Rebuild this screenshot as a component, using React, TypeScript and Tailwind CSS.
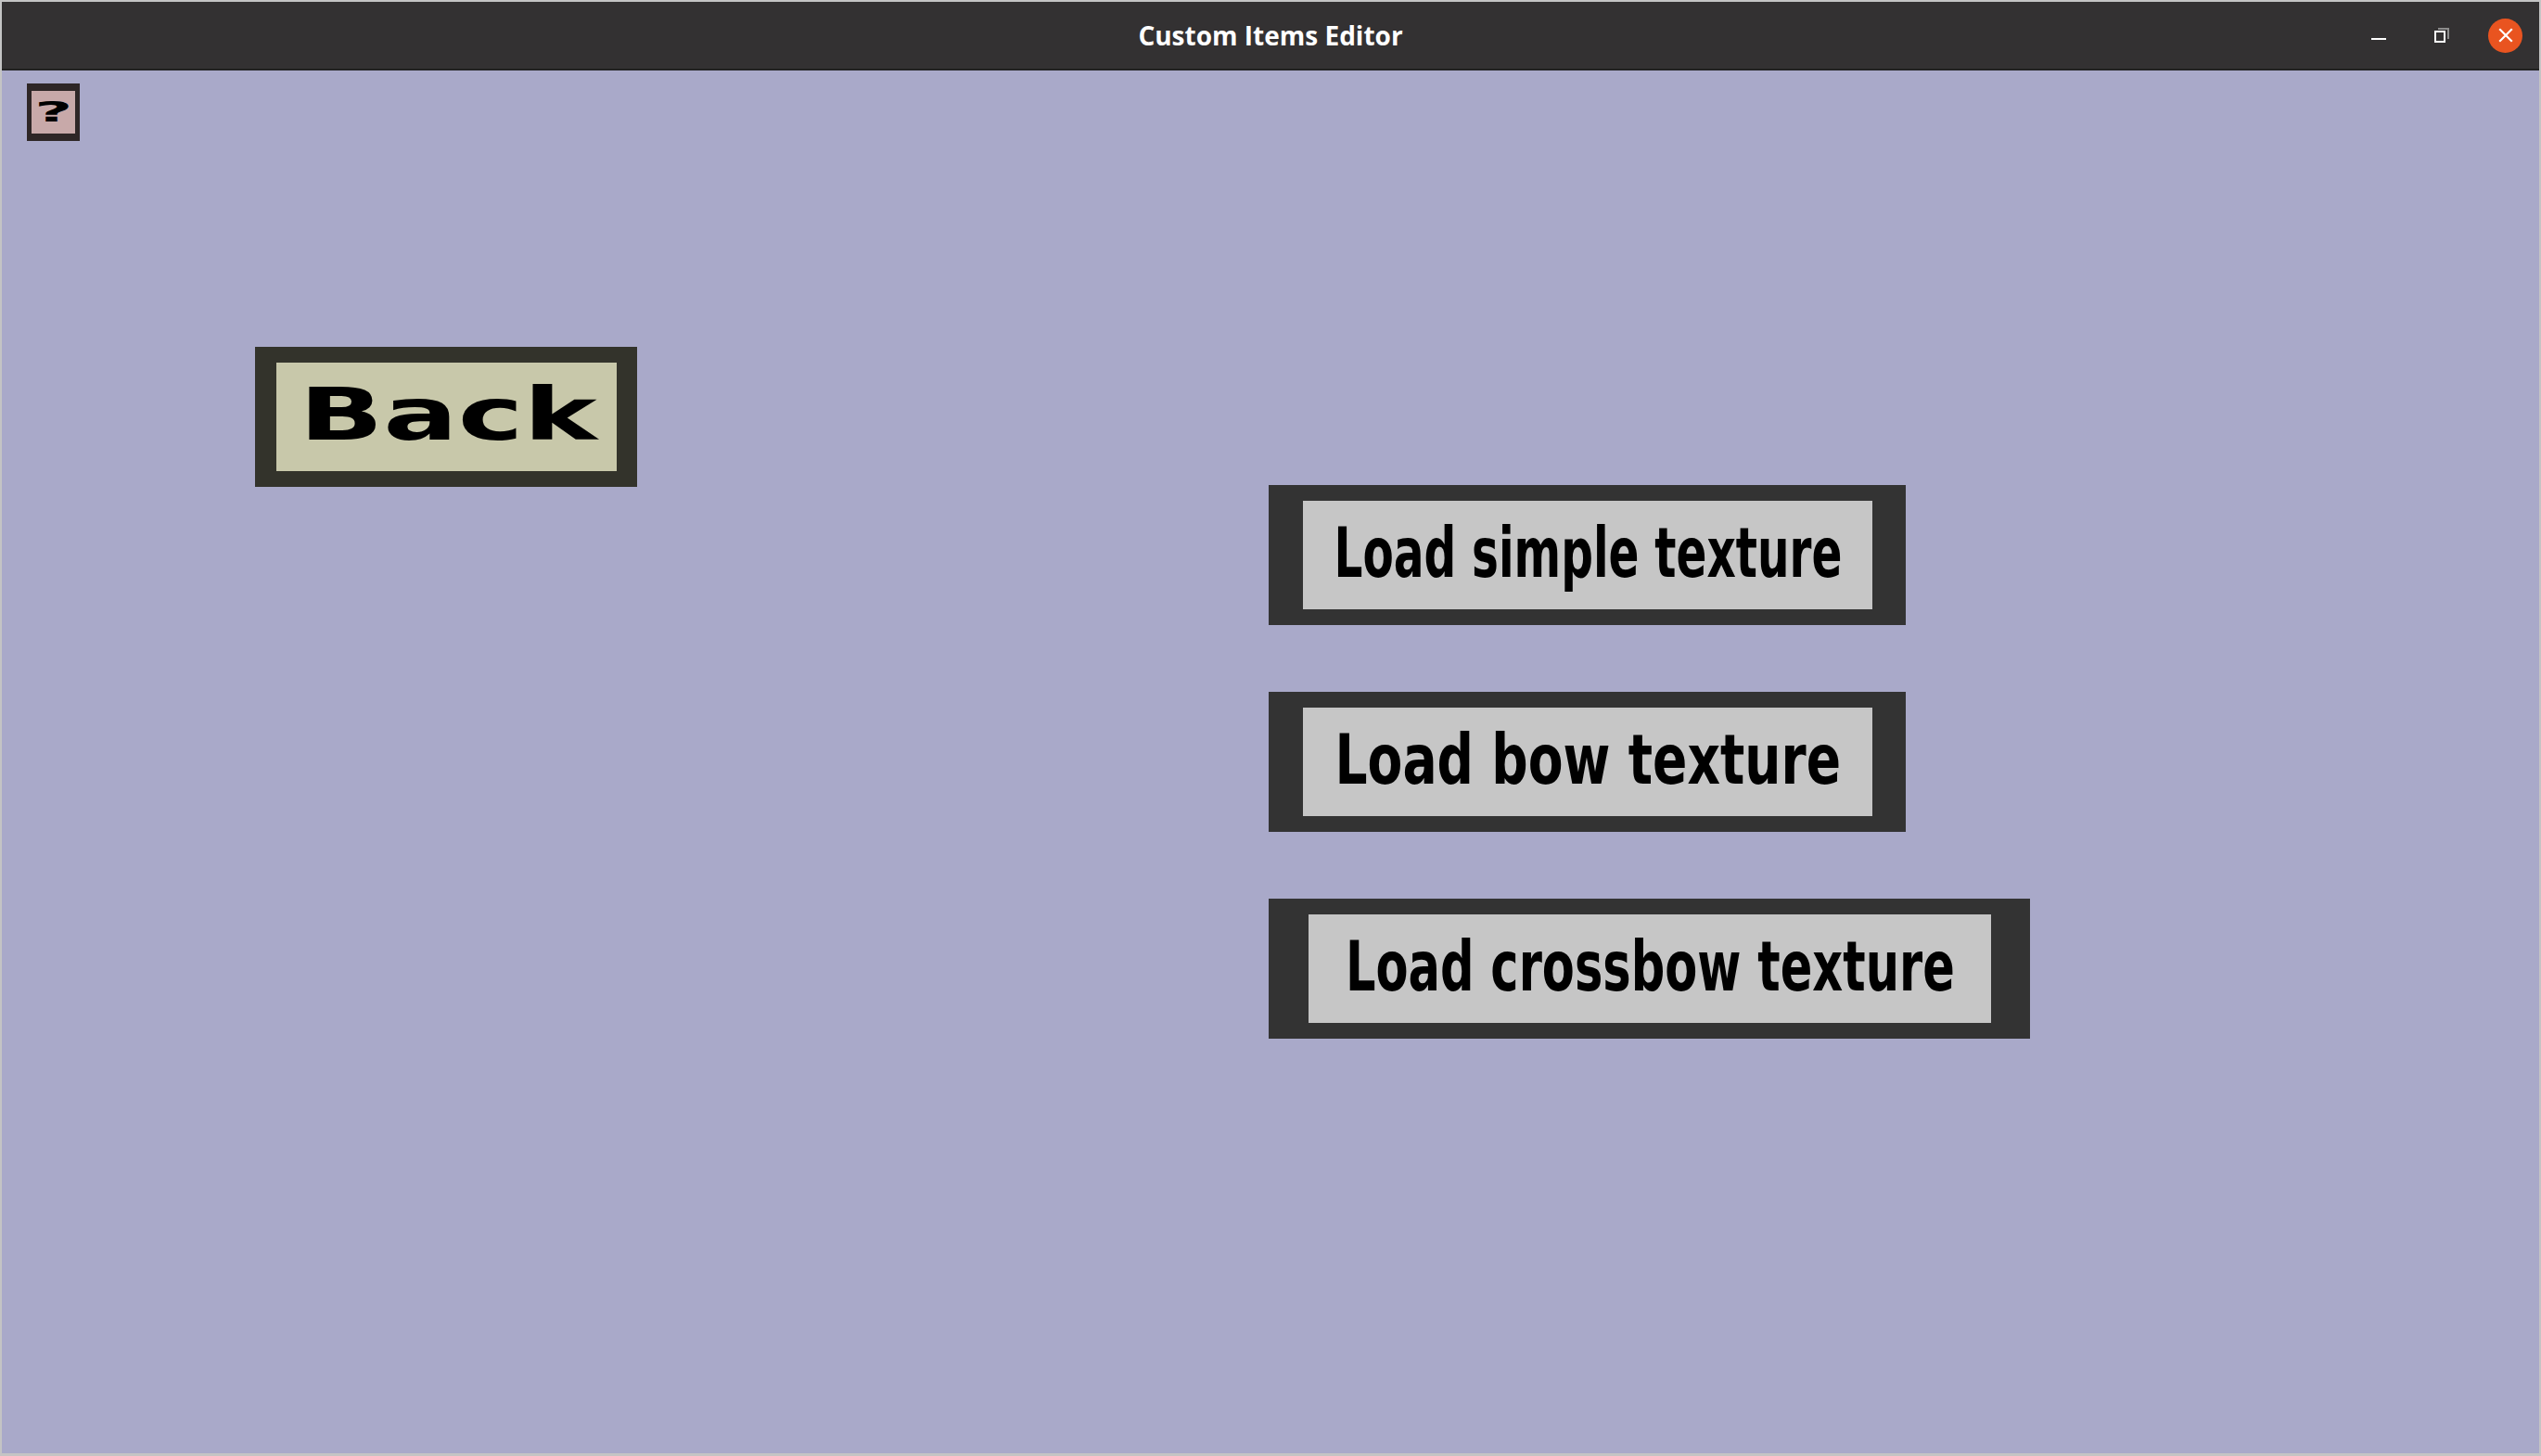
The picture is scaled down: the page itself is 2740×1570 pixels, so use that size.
import { useLayoutEffect, useRef, useState } from 'react'

const pixelFont = { fontFamily: '"DejaVu Sans", "Liberation Sans", sans-serif' }

interface FitTextProps {
  text: string
  fontSize: number
  targetWidth: number
}

function FitText({ text, fontSize, targetWidth }: FitTextProps) {
  const ref = useRef<HTMLSpanElement>(null)
  const [scale, setScale] = useState(1)

  useLayoutEffect(() => {
    if (ref.current) {
      const w = ref.current.offsetWidth
      if (w > 0) setScale(targetWidth / w)
    }
  }, [text, targetWidth])

  return (
    <span
      ref={ref}
      className="inline-block whitespace-nowrap font-bold text-black origin-center"
      style={{ ...pixelFont, fontSize, lineHeight: `${fontSize}px`, transform: `scaleX(${scale})` }}
    >
      {text}
    </span>
  )
}

function TitleBar() {
  return (
    <div className="grid grid-cols-[1fr_auto_1fr] items-center h-[74px] bg-[#333132] border-b-2 border-[#222222]">
      <div />
      <div className="text-white font-bold text-[28px] leading-none" style={{ fontFamily: '"Open Sans", "Noto Sans", sans-serif' }}>
        Custom Items Editor
      </div>
      <div className="flex items-center justify-end pr-[18px]">
        <div className="w-[16px] h-[2px] bg-white mt-[8px]" />
        <div className="relative w-[16px] h-[16px] ml-[52px]">
          <div className="absolute left-[4px] top-0 w-[12px] h-[12px] border-t-2 border-r-2 border-[#8c8c8c]" />
          <div className="absolute left-0 top-[3px] w-[12px] h-[13px] border-2 border-white" />
        </div>
        <div className="ml-[42px] w-[37px] h-[37px] rounded-full bg-[#e95420] flex items-center justify-center">
          <svg width="16" height="16" viewBox="0 0 16 16">
            <path d="M2 2 L14 14 M14 2 L2 14" stroke="white" strokeWidth="2.2" strokeLinecap="square" />
          </svg>
        </div>
      </div>
    </div>
  )
}

interface LoadButtonProps {
  label: string
  width: number
  borderX: number
  textWidth: number
}

function LoadButton({ label, width, borderX, textWidth }: LoadButtonProps) {
  return (
    <div className="bg-[#333333] py-[17px]" style={{ width, paddingLeft: borderX, paddingRight: borderX - 1 }}>
      <div className="h-[117px] bg-[#c6c6c6] flex justify-center pt-[19px] overflow-visible">
        <FitText text={label} fontSize={75} targetWidth={textWidth} />
      </div>
    </div>
  )
}

export default function App() {
  return (
    <div className="w-[2740px] h-[1570px] bg-[#c4c4c4] pt-[2px] pl-[2px] pr-[2px] pb-[3px] overflow-hidden">
      <div className="w-full h-full flex flex-col">
        <TitleBar />
        <div className="flex-1 bg-[#a9a9c9]">
          <div className="ml-[27px] mt-[14px] w-[57px] h-[62px] bg-[#2e2626] px-[5px] py-[8px]">
            <div className="w-full h-full bg-[#c8a9a9] flex items-center justify-center">
              <FitText text="?" fontSize={30} targetWidth={40} />
            </div>
          </div>

          <div className="flex items-start mt-[222px]">
            <div className="ml-[273px] w-[412px] bg-[#33332b] pl-[23px] pr-[22px] py-[17px]">
              <div className="h-[117px] bg-[#c8c8aa] flex justify-center pt-[17px] pl-[3px]">
                <FitText text="Back" fontSize={78} targetWidth={321} />
              </div>
            </div>

            <div className="ml-[681px] mt-[149px] flex flex-col items-start gap-[72px]">
              <LoadButton label="Load simple texture" width={687} borderX={37} textWidth={548} />
              <LoadButton label="Load bow texture" width={687} borderX={37} textWidth={546} />
              <LoadButton label="Load crossbow texture" width={821} borderX={43} textWidth={657} />
            </div>
          </div>
        </div>
      </div>
    </div>
  )
}
